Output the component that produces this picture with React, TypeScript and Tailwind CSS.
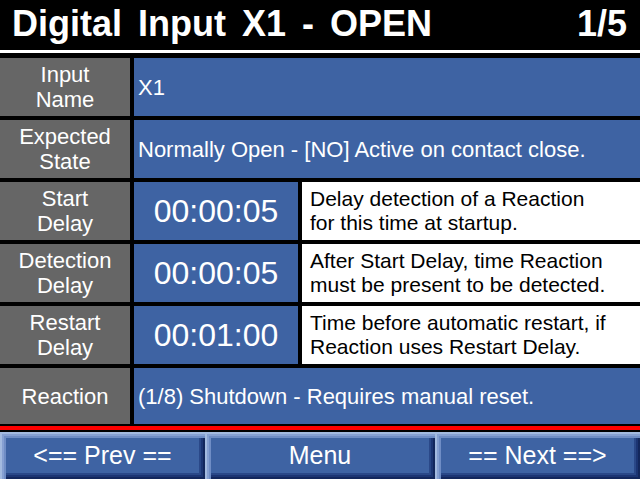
import React from "react";

const font = "font-['Liberation_Sans',Arial,sans-serif]";

function Label({ lines }: { lines: string[] }) {
  return (
    <div className="bg-[#666666] text-white text-[22px] leading-[25px] flex flex-col items-center justify-center text-center">
      {lines.map((l) => (
        <span key={l}>{l}</span>
      ))}
    </div>
  );
}

function TimeRow({ label, time, desc }: { label: string[]; time: string; desc: string[] }) {
  return (
    <>
      <Label lines={label} />
      <div className="bg-[#3e63a3] text-white text-[32px] flex items-center justify-center">{time}</div>
      <div className="bg-white text-black text-[21px] leading-[24px] flex flex-col justify-center pl-[8px]">
        {desc.map((d) => (
          <span key={d}>{d}</span>
        ))}
      </div>
    </>
  );
}

const bevel =
  "shadow-[inset_2px_2px_0_#a3badf,inset_4px_4px_0_#86a0d2,inset_6px_6px_0_#6f8dc5,inset_-2px_-2px_0_#13275c,inset_-4px_-4px_0_#1c3573,inset_-6px_-6px_0_#2a4888]";

export default function App() {
  return (
    <div className={`w-[640px] h-[479px] bg-black overflow-hidden flex flex-col ${font}`}>
      <div className="h-[50px] flex items-center justify-between pl-[12px] pr-[13px] pb-[3px] text-white font-bold text-[36px] leading-none">
        <span className="whitespace-pre [word-spacing:6px]">Digital Input X1 - OPEN</span>
        <span>1/5</span>
      </div>
      <div className="h-[3px] bg-white" />
      <div className="mt-[5px] grid grid-cols-[130px_164px_1fr] grid-rows-[58px_58px_58px_58px_58px_56px] gap-[4px]">
        <Label lines={["Input", "Name"]} />
        <div className="col-span-2 bg-[#3e63a3] text-white text-[22px] flex items-center pl-[4px]">X1</div>
        <Label lines={["Expected", "State"]} />
        <div className="col-span-2 bg-[#3e63a3] text-white text-[22px] flex items-center pl-[4px] whitespace-pre">
          Normally Open - [NO] Active on contact close.
        </div>
        <TimeRow label={["Start", "Delay"]} time="00:00:05" desc={["Delay detection of a Reaction", "for this time at startup."]} />
        <TimeRow
          label={["Detection", "Delay"]}
          time="00:00:05"
          desc={["After Start Delay, time Reaction", "must be present to be detected."]}
        />
        <TimeRow
          label={["Restart", "Delay"]}
          time="00:01:00"
          desc={["Time before automatic restart, if", "Reaction uses Restart Delay."]}
        />
        <Label lines={["Reaction"]} />
        <div className="col-span-2 bg-[#3e63a3] text-white text-[22px] flex items-center pl-[4px] whitespace-pre">
          (1/8) Shutdown - Requires manual reset.
        </div>
      </div>
      <div className="mt-[2px] h-[4px] bg-[#ff0000]" />
      <div className="mt-[2px] h-[47px] flex">
        <div className={`w-[205px] bg-[#3e63a3] ${bevel} text-white text-[25px] flex items-center justify-center`}>
          {"<== Prev =="}
        </div>
        <div className={`w-[230px] bg-[#3e63a3] ${bevel} text-white text-[25px] flex items-center justify-center`}>
          Menu
        </div>
        <div className={`w-[205px] bg-[#3e63a3] ${bevel} text-white text-[25px] flex items-center justify-center`}>
          {"== Next ==>"}
        </div>
      </div>
    </div>
  );
}
